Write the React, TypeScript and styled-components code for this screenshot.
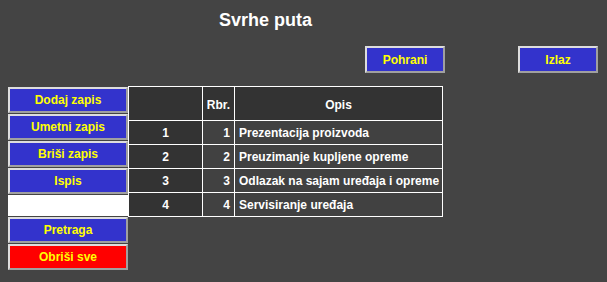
import styled, { createGlobalStyle } from "styled-components"

interface Purpose {
  id: number
  rbr: number
  opis: string
}

const purposes: Purpose[] = [
  { id: 1, rbr: 1, opis: "Prezentacija proizvoda" },
  { id: 2, rbr: 2, opis: "Preuzimanje kupljene opreme" },
  { id: 3, rbr: 3, opis: "Odlazak na sajam uređaja i opreme" },
  { id: 4, rbr: 4, opis: "Servisiranje uređaja" },
]

const GlobalStyle = createGlobalStyle`
  html, body {
    margin: 0;
    padding: 0;
    background: #444444;
    font-family: "Liberation Sans", Arial, sans-serif;
  }
`

const Page = styled.div`
  width: 607px;
  height: 282px;
  padding: 0 8px;
  box-sizing: border-box;
  background: #444444;
`

const Title = styled.h1`
  margin: 0;
  padding-top: 9px;
  width: 515px;
  text-align: center;
  font-size: 18px;
  line-height: 22px;
  font-weight: bold;
  color: #ffffff;
`

const Toolbar = styled.div`
  display: flex;
  justify-content: flex-end;
  gap: 73px;
  margin-top: 15px;
  padding-right: 1px;
`

const Button = styled.button<{ $danger?: boolean; $width?: number; $height?: number }>`
  display: block;
  width: ${(p) => p.$width ?? 120}px;
  height: ${(p) => p.$height ?? 26}px;
  padding: 0;
  box-sizing: border-box;
  background: ${(p) => (p.$danger ? "#ff0000" : "#3333cc")};
  color: #ffff00;
  font-family: "Liberation Sans", Arial, sans-serif;
  font-size: 12px;
  font-weight: bold;
  border: 2px solid;
  border-color: #dddddd #a0a0a0 #a0a0a0 #dddddd;
  cursor: pointer;
`

const Main = styled.div`
  display: flex;
  align-items: flex-start;
  margin-top: 13px;
`

const Sidebar = styled.div`
  display: flex;
  flex-direction: column;
  gap: 1px;
  width: 120px;
  padding-top: 1px;
`

const SearchInput = styled.input`
  width: 120px;
  height: 21px;
  box-sizing: border-box;
  border: none;
  margin: 0;
  padding: 0 4px;
  background: #ffffff;
  outline: none;
`

const Table = styled.table`
  border-collapse: collapse;
  border: 1px solid #ffffff;
  color: #ffffff;
  font-size: 12px;
  font-weight: bold;
`

const HeadCell = styled.th<{ $width: number }>`
  width: ${(p) => p.$width}px;
  height: 31px;
  padding: 0;
  border: 1px solid #ffffff;
  background: #333333;
  text-align: center;
  vertical-align: middle;
  padding-top: 2px;
`

const Cell = styled.td<{ $align: "left" | "center" | "right"; $dark?: boolean }>`
  height: 23px;
  padding: 0 ${(p) => (p.$align === "right" ? "4px" : "0")} 0 ${(p) => (p.$align === "left" ? "4px" : "0")};
  border: 1px solid #ffffff;
  background: ${(p) => (p.$dark ? "#333333" : "#414141")};
  text-align: ${(p) => p.$align};
  white-space: nowrap;
`

export default function App() {
  return (
    <>
      <GlobalStyle />
      <Page>
        <Title>Svrhe puta</Title>
        <Toolbar>
          <Button $width={80} $height={27}>Pohrani</Button>
          <Button $width={80} $height={27}>Izlaz</Button>
        </Toolbar>
        <Main>
          <Sidebar>
            <Button>Dodaj zapis</Button>
            <Button>Umetni zapis</Button>
            <Button>Briši zapis</Button>
            <Button>Ispis</Button>
            <SearchInput type="text" />
            <Button>Pretraga</Button>
            <Button $danger>Obriši sve</Button>
          </Sidebar>
          <Table>
            <thead>
              <tr>
                <HeadCell $width={73}></HeadCell>
                <HeadCell $width={31}>Rbr.</HeadCell>
                <HeadCell $width={207}>Opis</HeadCell>
              </tr>
            </thead>
            <tbody>
              {purposes.map((p) => (
                <tr key={p.id}>
                  <Cell $align="center" $dark>{p.id}</Cell>
                  <Cell $align="right">{p.rbr}</Cell>
                  <Cell $align="left">{p.opis}</Cell>
                </tr>
              ))}
            </tbody>
          </Table>
        </Main>
      </Page>
    </>
  )
}
